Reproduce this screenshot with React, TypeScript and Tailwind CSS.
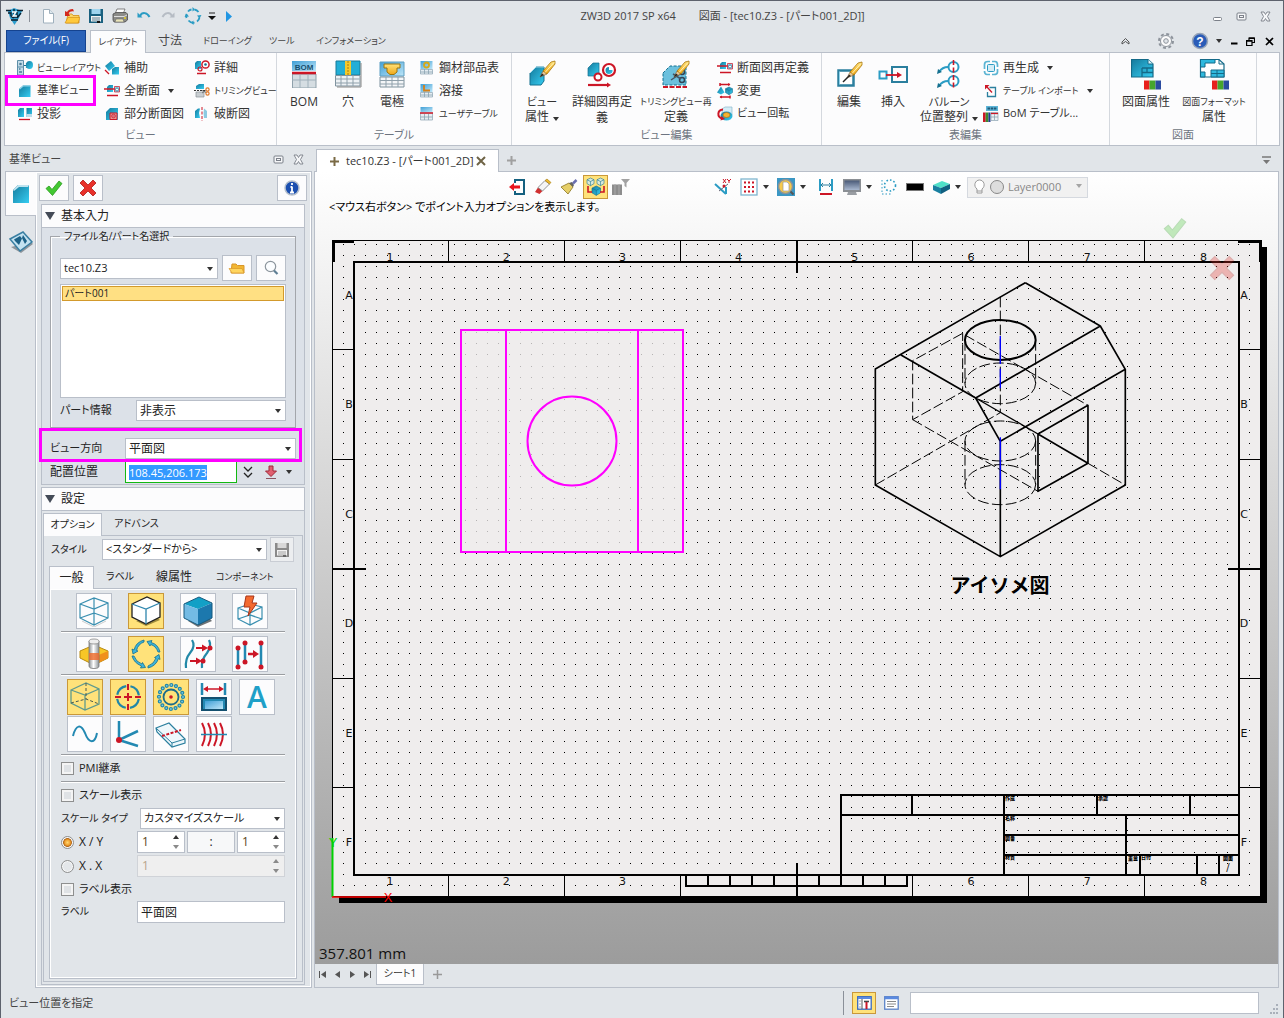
import React, { useEffect, useRef } from "react";

type Kids = { children?: React.ReactNode };

const TEAL = "url(#teal)";
const DK = "#14708f";
const RED = "#cc1626";

function Defs() {
  return (
    <svg className="absolute h-0 w-0" aria-hidden="true">
      <defs>
        <linearGradient id="teal" x1="0" y1="0" x2="1" y2="1">
          <stop offset="0" stopColor="#157a9c" />
          <stop offset="1" stopColor="#35cdf2" />
        </linearGradient>
        <linearGradient id="sky" x1="0" y1="0" x2="1" y2="1">
          <stop offset="0" stopColor="#3f9fd6" />
          <stop offset="1" stopColor="#bfe6f8" />
        </linearGradient>
        <linearGradient id="cyl" x1="0" y1="0" x2="1" y2="0">
          <stop offset="0" stopColor="#8d9296" />
          <stop offset="0.45" stopColor="#ffffff" />
          <stop offset="1" stopColor="#8d9296" />
        </linearGradient>
        <linearGradient id="gold" x1="0" y1="0" x2="0" y2="1">
          <stop offset="0" stopColor="#ffe27a" />
          <stop offset="1" stopColor="#f0a818" />
        </linearGradient>
        <linearGradient id="screen" x1="0" y1="0" x2="0" y2="1">
          <stop offset="0" stopColor="#4a5a78" />
          <stop offset="1" stopColor="#a9b8d0" />
        </linearGradient>
      </defs>
    </svg>
  );
}

function Svg({ w = 16, h = w, className = "", children }: Kids & { w?: number; h?: number; className?: string }) {
  return (
    <svg width={w} height={h} viewBox={`0 0 ${w} ${h}`} fill="none" className={`shrink-0 ${className}`} aria-hidden="true">
      {children}
    </svg>
  );
}

const Caret = ({ className = "", fill = "#333" }: { className?: string; fill?: string }) => (
  <svg width="6" height="4" viewBox="0 0 6 4" className={`shrink-0 ${className}`} aria-hidden="true">
    <path d="M0 0h6L3 4z" fill={fill} />
  </svg>
);

const Pencil = ({ x = 0, y = 0 }: { x?: number; y?: number }) => (
  <g transform={`translate(${x} ${y})`}>
    <path d="M0 16L3 10L7 13Z" fill="#e8c79a" stroke="#7a5a30" strokeWidth=".6" />
    <path d="M0 16l2-3.5 2 1.6z" fill="#222" />
    <path d="M3 10L11 1L15 0L15 3L7 13Z" fill="url(#gold)" stroke="#a8760c" strokeWidth=".8" />
    <path d="M5 11.5L14 1.500" stroke="#fff3b8" strokeWidth="1" />
  </g>
);

const Cube = ({ x, y, s, f = TEAL }: { x: number; y: number; s: number; f?: string }) => (
  <g transform={`translate(${x} ${y}) scale(${s})`}>
    <path d="M0 2.500L5 0L10 2.500V8L5 11L0 8Z" fill={f} stroke={DK} strokeWidth=".8" />
    <path d="M0 2.500L5 5L10 2.500M5 5V11" stroke={DK} strokeWidth=".8" fill="none" />
  </g>
);

/* ---------- quick access icons ---------- */

const AppIcon = () => (
  <Svg w={17}>
    <path d="M2 3L8 0L16 3L13 10L8.500 17L4 10Z" fill="#2f9fcf" />
    <path d="M0 2.500h5M11 2.500h6M2 5h3v3l3 2M8 1v5l-2 4M11 4v5h-3M15 5l-4 5M5 12h7" stroke="#0c2230" strokeWidth="1.400" />
    <path d="M6 4h4l-3 4h4" stroke="#fff" strokeWidth="1.300" />
  </Svg>
);
const NewIcon = () => (
  <Svg w={16}>
    <path d="M3.500 1.500H9.500L13.500 5.500V15H3.500Z" fill="#fff" stroke="#9fb0bd" />
    <path d="M9.500 1.500V5.500H13.500" fill="#dfe9ef" stroke="#9fb0bd" />
  </Svg>
);
const OpenIcon = () => (
  <Svg w={16}>
    <path d="M2 15L4 6H8L9 7.500H15V15Z" fill="url(#gold)" stroke="#d18d12" strokeWidth=".8" />
    <path d="M1 15L4 9.500H16L14 15Z" fill="#ffc93c" stroke="#d18d12" strokeWidth=".6" />
    <path d="M9 1C6 1 4 2 3 4L1 3V8H6L4.700 5.500C5.500 4 7 3 10 3.500Z" fill="#d3281c" />
  </Svg>
);
const SaveIcon = ({ grey = false }: { grey?: boolean }) => (
  <Svg w={16}>
    <path d="M1 1H15V15H1Z" fill={grey ? "#8a8a8a" : "#19607f"} />
    <path d="M3.500 1H12.500V6H3.500Z" fill={grey ? "#d8d8d8" : "#9fd4ee"} />
    <path d="M3 8H13V13.500H3Z" fill="#f3f3f3" />
    <path d="M4 10h8M4 12h8" stroke={grey ? "#a0a0a0" : "#5f7f90"} />
    <path d="M9 13h3v2H9z" fill={grey ? "#666" : "#111"} />
  </Svg>
);
const PrintIcon = () => (
  <Svg w={16}>
    <path d="M5 1H13L11 6H3Z" fill="#fff" stroke="#666" strokeWidth=".8" />
    <path d="M1 6L4 4.500H14L15.500 6V12L13 14H2L1 12Z" fill="#8b8b88" stroke="#4a4a4a" strokeWidth=".8" />
    <path d="M2 8.500H12L15 7" stroke="#ddd" />
    <path d="M4 11H11L12 14H3Z" fill="#e9e4b8" stroke="#666" strokeWidth=".6" />
    <circle cx="13" cy="10" r="1" fill="#e8d020" />
  </Svg>
);
const UndoIcon = ({ c = "#2b9cc4" }: { c?: string }) => (
  <Svg w={16}>
    <path d="M4 8C6 4 11 4 13.500 9" stroke={c} strokeWidth="2" />
    <path d="M1.500 4.500V9.500H6.500Z" fill={c} />
  </Svg>
);
const RefreshIcon = () => (
  <Svg w={18}>
    <path d="M4 4.500A6.500 6.500 0 0 1 7.500 2.500M10.500 2.500A6.500 6.500 0 0 1 14.500 5M15.500 10.500A6.500 6.500 0 0 1 13 14.500M10.500 15.700A6.500 6.500 0 0 1 4.500 13.500M2.500 11A6.500 6.500 0 0 1 2.500 7" stroke="#2b9cc4" strokeWidth="1.800" />
    <path d="M8.500 0L11 2.500L8.500 4.500ZM17.500 8L15.500 11.500L13 8.500ZM9.500 18L7 15.500L9.500 13.500ZM.5 10L2.500 6.500L5 9.500Z" fill="#2b9cc4" />
  </Svg>
);

/* ---------- small ribbon icons ---------- */

const I = {
  viewLayout: (
    <Svg>
      <path d="M.5 .5H6.500V15H.5Z" fill="#c3dbe8" stroke="#5d8ea8" />
      <path d="M.5 7h6" stroke="#5d8ea8" />
      <circle cx="3.500" cy="4" r="1.300" fill="#4a7d99" />
      <path d="M2 9h1.500M2 12h3" stroke="#4a7d99" strokeWidth="1.500" />
      <path d="M7 5.500h4M9 3.500l2.500 2L9 7.500" stroke={DK} strokeWidth="1.200" />
      <ellipse cx="12.500" cy="5" rx="3.500" ry="4" fill={TEAL} />
    </Svg>
  ),
  base: (
    <Svg>
      <path d="M2 6L6 2.500H13.500V14H2Z" fill={TEAL} />
      <path d="M2 6L6 2.500H13.500L13 3.500H6.500L3 6.500Z" fill="#8fd6ec" />
    </Svg>
  ),
  project: (
    <Svg>
      <path d="M1 4L3 2H7V11H1Z" fill={TEAL} />
      <path d="M9.500 2H15V11H9.500Z" fill={TEAL} />
      <path d="M2 13.500H13" stroke={RED} strokeWidth="1.300" />
      <path d="M9.500 8H15V11H9.500Z" fill="#bcdceb" />
    </Svg>
  ),
  aux: (
    <Svg>
      <path d="M1 6L7 1L11 6L5 11Z" fill={TEAL} />
      <path d="M8 9L11 7H15V14.500H8Z" fill={TEAL} />
      <path d="M1 10L5 14" stroke={RED} strokeWidth="1.200" />
    </Svg>
  ),
  fullSection: (
    <Svg>
      <path d="M3 4L5 2H9V9H3Z" fill={TEAL} />
      <path d="M0 6H16" stroke={RED} strokeWidth="1.500" />
      <path d="M10.500 3.500H15.500V9H10.500Z" fill="#9dcfe3" stroke={RED} strokeWidth=".7" />
      <circle cx="13" cy="6.500" r="1.500" fill="#fff" stroke={DK} strokeWidth=".7" />
      <path d="M3 12.500H14" stroke={RED} strokeWidth="1.500" />
    </Svg>
  ),
  partSection: (
    <Svg>
      <path d="M2 6L6 2H14V14H2Z" fill={TEAL} />
      <path d="M6 7H13V13.500H6Z" fill="#e89a92" stroke={RED} />
      <circle cx="9.500" cy="10" r="2" fill="#d5707a" stroke={RED} strokeWidth=".6" />
    </Svg>
  ),
  detail: (
    <Svg>
      <path d="M1 3L3 1H7V9H1Z" fill={TEAL} />
      <circle cx="11.500" cy="4.500" r="3.600" stroke={RED} strokeWidth="1.500" fill="#fff" />
      <circle cx="11.500" cy="4.500" r="1.300" fill={DK} />
      <circle cx="6" cy="9" r="2" stroke={RED} strokeWidth="1.200" />
      <path d="M3 13.500H12" stroke={RED} strokeWidth="1.500" />
    </Svg>
  ),
  trim: (
    <Svg>
      <path d="M2 3L5 1H10V6H2Z" fill={TEAL} />
      <path d="M0 7.500H11" stroke="#333" strokeDasharray="2 1" />
      <path d="M2 9H10V14H2Z" fill="#c9ced2" stroke="#8a9299" strokeWidth=".7" />
      <circle cx="13.500" cy="6.500" r="1.600" stroke="#e07828" strokeWidth="1.200" />
      <circle cx="13.500" cy="10.500" r="1.600" stroke="#e07828" strokeWidth="1.200" />
      <path d="M12 7.500L8 10M12 9.500L8 7.500" stroke="#777" />
    </Svg>
  ),
  broken: (
    <Svg>
      <path d="M1 5L4 2.500H6L5 7L6 12H1Z" fill={TEAL} />
      <path d="M10 2.500L13 5V12H10L9.500 7Z" fill="#8ccbe2" />
      <path d="M8 1V15" stroke={RED} strokeDasharray="3 1.500" />
    </Svg>
  ),
  steel: (
    <Svg>
      <path d="M1.500 1H13.500V9H1.500Z" fill="url(#sky)" />
      <circle cx="7.500" cy="5" r="2.500" stroke="#d6a818" strokeWidth="1.800" />
      <path d="M1.500 9.500H13.500V14H1.500Z" fill="#e5edf2" stroke="#8aa2b0" strokeWidth=".7" />
      <path d="M5.500 9v5M9.500 9v5M1.500 12h12" stroke="#8aa2b0" strokeWidth=".8" />
    </Svg>
  ),
  weld: (
    <Svg>
      <path d="M1.500 1H13.500V9H1.500Z" fill="url(#sky)" />
      <path d="M5 2V7.500H11" stroke="#d68018" strokeWidth="1.800" />
      <path d="M1.500 9.500H13.500V14H1.500Z" fill="#e5edf2" stroke="#8aa2b0" strokeWidth=".7" />
      <path d="M5.500 9v5M9.500 9v5M1.500 12h12" stroke="#8aa2b0" strokeWidth=".8" />
    </Svg>
  ),
  userTable: (
    <Svg>
      <path d="M1.500 1H13.500V6H1.500Z" fill="url(#sky)" />
      <path d="M1.500 7H13.500V14H1.500Z" fill="#e5edf2" stroke="#8aa2b0" strokeWidth=".7" />
      <path d="M5.500 8v6M9.500 8v6M1.500 11h12" stroke="#8aa2b0" strokeWidth=".8" />
      <path d="M1 7H14" stroke={RED} strokeWidth="1.500" />
    </Svg>
  ),
  change: (
    <Svg>
      <path d="M3 1.500H13M3 0v3" stroke={RED} strokeWidth="1.500" />
      <path d="M0 9.500L4 3.500L7.500 9.500L4 11.500Z" fill={TEAL} />
      <Cube x={8.500} y={4} s={0.700} />
      <path d="M3 14H13M13 12.500v3" stroke={RED} strokeWidth="1.500" />
      <path d="M11 0l2.500 1.500L11 3zM5 12.500L2.500 14L5 15.500z" fill={RED} />
    </Svg>
  ),
  rotate: (
    <Svg>
      <path d="M5 3L8 1H15V9H5Z" fill="#d4ecf6" stroke="#8bb9cc" strokeWidth=".7" />
      <ellipse cx="9.500" cy="10" rx="6" ry="4.500" fill={TEAL} />
      <ellipse cx="9.500" cy="9" rx="3.500" ry="2.500" fill="#f5b430" stroke="#b0660c" strokeWidth=".6" />
      <path d="M6 3.500C0 4 0 11 5 12.500" stroke={RED} strokeWidth="2" />
      <path d="M3.500 14.500L8 13L4.500 10Z" fill={RED} />
    </Svg>
  ),
  regen: (
    <Svg>
      <rect x="4.500" y="4.500" width="7" height="7" rx="1" fill="#d5ecf5" stroke="#2b9cc4" />
      <path d="M1.500 9V4.500Q1.500 1.500 5 1.500H7M9 1.500H12Q14.500 1.500 14.500 5V7M14.500 9V12Q14.500 14.500 11 14.500H9M7 14.500H4Q1.500 14.500 1.500 11" stroke="#5bb4d3" strokeWidth="1.700" />
    </Svg>
  ),
  importTable: (
    <Svg>
      <path d="M6.500 4.500H12.500V13.500H4.500V9" stroke="#2b7f9e" strokeWidth="1.300" />
      <path d="M4 4L9 9.500" stroke={RED} strokeWidth="1.300" />
      <path d="M2 2H6.500L2 6.500Z" fill={RED} />
    </Svg>
  ),
  bomTable: (
    <Svg>
      <path d="M3 0H15V5H3Z" fill="#5db5d8" />
      <path d="M4.500 2.500h9" stroke="#1d5a78" strokeWidth="2" strokeDasharray="2.500 .7" />
      <path d="M0 6.500H2.700V16H0Z" fill={RED} />
      <path d="M2.700 6.500H5.400V16H2.700Z" fill="#3d8a2e" />
      <path d="M5.400 6.500H7.500V16H5.400Z" fill="#253a8e" />
      <path d="M8 6.500H15V14.500H8Z" fill="#eef3f6" stroke="#8aa2b0" strokeWidth=".7" />
      <path d="M8 7.500h7" stroke={RED} strokeWidth="1.300" />
      <path d="M11.500 8v6M8 11h7" stroke="#8aa2b0" strokeWidth=".8" />
    </Svg>
  ),
};

/* ---------- large ribbon icons ---------- */

const B = {
  bom: (
    <Svg w={28}>
      <path d="M2 1H26V11H2Z" fill="url(#sky)" />
      <text x="14" y="10" textAnchor="middle" fontSize="8" fontWeight="700" fill="#154f70" fontFamily="Liberation Sans">BOM</text>
      <path d="M2.500 14H26V28H2.500Z" fill="#d5dde2" stroke="#8fa0ab" />
      <path d="M10 15v13M18 15v13M2 20h24" stroke="#9fb0ba" />
      <path d="M2 13H26" stroke={RED} strokeWidth="2.500" />
    </Svg>
  ),
  hole: (
    <Svg w={28}>
      <path d="M2 1H26V15H2Z" fill="#22aed6" stroke="#167a9a" />
      <path d="M11 1H17V15H11Z" fill="#f5c92a" />
      <path d="M14 1V15" stroke="#a87c10" strokeDasharray="2 1" />
      <path d="M1.500 15.500H26V26H1.500Z" fill="#eef2f5" stroke="#7f929e" />
      <path d="M7 15v11M13 15v11M19 15v11M1.500 19h24M1.500 23h24" stroke="#8fa0ab" />
      <path d="M27 3V27H3" stroke="#888" />
    </Svg>
  ),
  electrode: (
    <Svg w={28}>
      <path d="M2 2H26V16H2Z" fill="url(#sky)" stroke="#5d9fc2" />
      <path d="M6 4H22V8H19V12L16 14.500H12L9 12V8H6Z" fill="url(#gold)" stroke="#9a7410" />
      <path d="M2 17H26V27H2Z" fill="#f4f6f8" stroke="#7f929e" />
      <path d="M8 17v10M14 17v10M20 17v10M2 20.500h24M2 24h24" stroke="#8fa0ab" />
    </Svg>
  ),
  viewAttr: (
    <Svg w={28}>
      <path d="M2 13L8 7H16V21L13 25H2Z" fill={TEAL} stroke={DK} />
      <path d="M2 13L8 7H16" stroke="#a6deef" />
      <Pencil x={12} y={1} />
    </Svg>
  ),
  detailRedef: (
    <Svg w={30} h={28}>
      <path d="M1 8L6 3H12V16H1Z" fill={TEAL} stroke={DK} strokeWidth=".7" />
      <circle cx="22" cy="10" r="6" fill="#fff" stroke={RED} strokeWidth="2.200" />
      <path d="M22 10V7A3.500 3.500 0 1 0 25.500 10Z" fill={TEAL} />
      <circle cx="11" cy="17" r="3.500" stroke={RED} strokeWidth="2" fill="#fff" />
      <path d="M1 25H20" stroke={RED} strokeWidth="2.200" />
      <path d="M20 22.500l4 2.500-4 2.500z" fill={RED} />
    </Svg>
  ),
  trimRedef: (
    <Svg w={30} h={28}>
      <path d="M2 13L9 6H25V25H2Z" fill="#6cc0dd" stroke={DK} strokeDasharray="3 1.500" />
      <circle cx="21" cy="12" r="2.500" stroke="#345" strokeWidth="1.500" />
      <circle cx="21" cy="20" r="2.500" stroke="#345" strokeWidth="1.500" />
      <path d="M10 20l9-6M12 14l8 5" stroke="#456" strokeWidth="1.500" />
      <path d="M2 27H26" stroke={RED} strokeWidth="2" strokeDasharray="5 1.500" />
      <Pencil x={13} y={1} />
    </Svg>
  ),
  edit: (
    <Svg w={28}>
      <path d="M3.500 10.500H18.500V25.500H3.500Z" fill="#fff" stroke="#2b7f9e" strokeWidth="2.500" />
      <path d="M4.500 24.500V11.500" stroke="#8fd2ea" />
      <Pencil x={12} y={2} />
      <path d="M8 22l5-5" stroke="#222" strokeWidth="1.500" />
    </Svg>
  ),
  insert: (
    <Svg w={30} h={28}>
      <rect x="1.500" y="11.500" width="7" height="7" stroke="#2b9cc4" strokeWidth="2" />
      <rect x="14" y="7" width="15" height="15" stroke="#2b7f9e" strokeWidth="2" />
      <path d="M8 15H20" stroke={RED} strokeWidth="1.800" />
      <path d="M19 12l5 3-5 3z" fill={RED} />
    </Svg>
  ),
  balloon: (
    <Svg w={28} h={30}>
      <circle cx="18.500" cy="8" r="5" stroke="#2b9cc4" strokeWidth="2" fill="#fff" />
      <circle cx="18.500" cy="22" r="5" stroke="#2b9cc4" strokeWidth="2" fill="#fff" />
      <path d="M13 8C8 8 6 10 4 13M13 22C8 22 6 24 4 27" stroke="#2b9cc4" strokeWidth="2" />
      <path d="M2 15l1-5 4 3zM2 29l1-5 4 3z" fill={DK} />
      <path d="M18.500 1V30" stroke={RED} strokeWidth="1.600" strokeDasharray="5 2.500" />
    </Svg>
  ),
  sheetAttr: (
    <Svg w={30} h={32}>
      <path d="M.5 1.500H17L22 6V19H.5Z" fill={TEAL} stroke="#146a88" strokeWidth="1.200" />
      <path d="M17 1.500V6H22" fill="#dff3fa" stroke="#146a88" />
      <path d="M11 10h11M11 14.500h11M11 10v9M16 10v4.500" stroke="#146a88" strokeWidth="1.300" />
      <path d="M13 22.500H18.500V31.500H13Z" fill="#e8201c" />
      <path d="M18.500 22.500H24.500V31.500H18.500Z" fill="#46a52e" />
      <path d="M24.500 22.500H30V31.500H24.500Z" fill="#2a4ba0" />
    </Svg>
  ),
  sheetFormat: (
    <Svg w={30} h={32}>
      <path d="M1.500 1.500H20L25 6V19H1.500Z" fill="#fff" stroke="#146a88" strokeWidth="1.200" />
      <path d="M1.500 1.500H16V5H6V9H1.500ZM1.500 14H6V19H1.500ZM12 12H25V19H12Z" fill="#2fb9de" stroke="#146a88" />
      <path d="M20 1.500V6H25M12 15.500h13M18 12v7" stroke="#146a88" />
      <path d="M13 22.500H18.500V31.500H13Z" fill="#e8201c" />
      <path d="M18.500 22.500H24.500V31.500H18.500Z" fill="#46a52e" />
      <path d="M24.500 22.500H30V31.500H24.500Z" fill="#2a4ba0" />
    </Svg>
  ),
};

/* ---------- ribbon parts ---------- */

type Size = "xs" | "s" | "m";
const TEXT: Record<Size, string> = { xs: "text-[9px]", s: "text-[11px]", m: "text-xs" };

function Small({ icon, label, caret, size = "m" }: { icon: React.ReactNode; label: string; caret?: boolean; size?: Size }) {
  return (
    <button className={`flex h-[23px] items-center gap-1 whitespace-nowrap ${TEXT[size]}`}>
      {icon}
      <span>{label}</span>
      {caret && <Caret className="ml-1" />}
    </button>
  );
}

function Big({ icon, lines, caret, className, size = "m" }: { icon: React.ReactNode; lines: string[]; caret?: boolean; className: string; size?: Size }) {
  return (
    <button className={`flex shrink-0 flex-col items-center pt-[5px] leading-[15px] whitespace-nowrap ${className}`}>
      <span className="mb-1 flex h-8 items-center">{icon}</span>
      {lines.map((l, i) => (
        <span key={l} className={`flex items-center gap-1 ${i === 0 ? TEXT[size] : ""}`}>
          {l}
          {caret && i === lines.length - 1 && <Caret className="mt-1" />}
        </span>
      ))}
    </button>
  );
}

function Group({ label, className, children }: Kids & { label: string; className: string }) {
  return (
    <section className={`flex shrink-0 flex-col border-r border-[#d4d8de] ${className}`}>
      <div className="flex flex-1">{children}</div>
      <h2 className="h-5 text-center text-[11px] leading-5 text-[#6d7480]">{label}</h2>
    </section>
  );
}

/* ---------- form parts ---------- */

function Combo({ id, value, className, small }: { id: string; value: string; className: string; small?: boolean }) {
  return (
    <div className={`relative h-[21px] border border-[#b9bfc9] bg-white ${className}`}>
      <select id={id} aria-label={id} className={`block h-full w-full appearance-none bg-transparent px-[3px] outline-none ${small ? "text-[11px]" : "text-xs"}`}>
        <option>{value}</option>
      </select>
      <Caret className="pointer-events-none absolute top-2 right-1" />
    </div>
  );
}

function Tool({ on, label, children }: Kids & { on?: boolean; label: string }) {
  return (
    <button aria-label={label} className={`flex h-9 w-9 items-center justify-center border ${on ? "border-[#c9983a] bg-[#ffe27a]" : "border-[#b9bfc9] bg-[#fcfcfd]"}`}>
      {children}
    </button>
  );
}

function Spin({ id, value, className, disabled }: { id: string; value: string; className: string; disabled?: boolean }) {
  return (
    <div className={`flex h-[22px] items-center justify-between border pr-[5px] ${disabled ? "border-[#d0d3d8] bg-[#efefef]" : "border-[#b9bfc9] bg-white"} ${className}`}>
      <input id={id} aria-label={id} defaultValue={value} disabled={disabled} className={`w-6 min-w-0 flex-1 bg-transparent pl-1 text-xs outline-none ${disabled ? "text-[#b8a48c]" : "text-[#5b4520]"}`} />
      <Svg w={6} h={14}>
        <path d="M0 4L3 0L6 4Z" fill={disabled ? "#8a8a8a" : "#333"} />
        <path d="M0 10L3 14L6 10Z" fill="#8a8a8a" />
      </Svg>
    </div>
  );
}

function Check({ id, label }: { id: string; label: string }) {
  return (
    <label htmlFor={id} className="flex items-center gap-[5px] text-[11px]">
      <input id={id} type="checkbox" className="h-[13px] w-[13px] appearance-none border border-[#8e8f8f] bg-[#dfe2e5] shadow-[inset_0_0_0_2px_#f4f4f4]" />
      {label}
    </label>
  );
}

function Radio({ id, label, on }: { id: string; label: string; on?: boolean }) {
  return (
    <label htmlFor={id} className="flex w-[76px] shrink-0 items-center gap-[5px]">
      <input
        id={id}
        type="radio"
        name="scale"
        defaultChecked={on}
        className="h-[13px] w-[13px] appearance-none rounded-full border border-[#8e8f8f] bg-[#e4e7ea] shadow-[inset_0_0_0_1px_#f8f8f8] checked:bg-[radial-gradient(circle,#ffd873_0%,#f0a030_35%,#a85c10_55%,#f4f4f4_62%)]"
      />
      {label}
    </label>
  );
}

const Rule = () => <hr className="mx-[11px] border-t border-b border-t-[#9a9da1] border-b-white" />;

/* ---------- option icons (32 x 32) ---------- */

const wire = "#3a8fb0";
const T = {
  wire: (
    <Svg w={32}>
      <path d="M2 9L16 3L30 8V23L16 30L2 23ZM2 9L16 14L30 8M16 14V30M16 3V18L2 23M16 18L30 23" stroke={wire} strokeWidth="1.200" />
      <path d="M4 26l12 6 12-6" stroke="#ccc" />
    </Svg>
  ),
  solid: (
    <Svg w={32}>
      <path d="M6 26L16 31L30 25L26 22Z" fill="#a08c3c" />
      <path d="M2 9L17 2L30 8V22L16 29L2 22Z" fill="#fff" stroke="#222" strokeWidth="1.300" />
      <path d="M2 9L16 14L30 8M16 14V29" stroke="#2f86ad" strokeWidth="1.300" />
    </Svg>
  ),
  shaded: (
    <Svg w={32}>
      <path d="M6 26L16 32L30 26L26 22Z" fill="#6d7275" />
      <path d="M2 9L17 2L30 8L16 14Z" fill="#12a0c6" />
      <path d="M2 9L16 14V30L2 23Z" fill="#74bbe4" />
      <path d="M30 8L16 14V30L30 23Z" fill="#1c78ad" />
      <path d="M2 9L17 2L30 8V23L16 30L2 23Z" stroke="#175a7f" />
    </Svg>
  ),
  quick: (
    <Svg w={32}>
      <path d="M4 13L16 9L28 12V24L16 30L4 24ZM4 13L16 18L28 12M16 18V30M4 24L16 20L28 24" stroke={wire} strokeWidth="1.200" />
      <path d="M12 1H20L18 8H23L14 21L16 12H10Z" fill="#f36a30" stroke="#a8361a" />
    </Svg>
  ),
  thread: (
    <Svg w={32}>
      <path d="M2 13L16 7L30 13V20L16 27L2 20Z" fill="#f7c626" stroke="#b88a10" />
      <path d="M16 19V27L30 20V13Z" fill="#f0901c" />
      <path d="M11 3V28A5 2.500 0 0 0 21 28V3Z" fill="url(#cyl)" stroke="#777" strokeWidth=".8" />
      <path d="M11 15H21V22H11Z" fill="#ef6a28" opacity=".8" />
      <ellipse cx="16" cy="3.500" rx="5" ry="2.500" fill="#eee" stroke="#888" strokeWidth=".8" />
    </Svg>
  ),
  cycle: (
    <Svg w={32}>
      <g stroke={DK} strokeWidth=".8" fill="#3bb4dd">
        <path d="M14 2Q6 4 4 12L2 11L3 16L8 13L6.500 12.500Q8 6 14 4Z" />
        <path d="M30 14Q28 6 21 4.500L22 2.500L17 3.500L20 8L20.700 6.500Q26 8 28 14Z" />
        <path d="M18 30Q26 28 28.500 20.500L30 21.500L29 16.500L24.500 19.500L26 20Q24 26 18 28Z" />
        <path d="M2 18Q4 25 11.500 28L10.500 30L15.500 29.500L12.500 24.500L12 26Q6 24 4 18Z" />
      </g>
    </Svg>
  ),
  curve: (
    <Svg w={32}>
      <path d="M10 2Q14 8 8 15Q3 21 4 30M27 2Q30 8 25 15Q19 22 20 30" stroke="#2389a8" strokeWidth="2.200" />
      <path d="M14 10H22M8 23H15" stroke={RED} strokeWidth="2" />
      <path d="M20 6.500l6 3.500-6 3.500zM14 19.500l6 3.500-6 3.500z" fill={RED} />
      <circle cx="28" cy="10" r="2.500" fill={RED} />
      <circle cx="21" cy="23" r="2.500" fill={RED} />
    </Svg>
  ),
  shift: (
    <Svg w={32}>
      <path d="M4 10V28M11 5V23M27 5V28" stroke="#2389b2" strokeWidth="2.500" />
      <path d="M14 16H20" stroke={RED} strokeWidth="2.500" />
      <path d="M19 12l6 4-6 4z" fill={RED} />
      <g fill={RED}>
        <circle cx="4" cy="10" r="2.500" /><circle cx="4" cy="29" r="2.500" /><circle cx="11" cy="5" r="2.500" />
        <circle cx="11" cy="24" r="2.500" /><circle cx="27" cy="5" r="2.500" /><circle cx="27" cy="29" r="2.500" />
      </g>
    </Svg>
  ),
  hidden: (
    <Svg w={32}>
      <path d="M2 9L17 2L30 8V23L16 29L2 22ZM2 9L16 14L30 8M16 14V29" stroke="#5f9a8f" strokeWidth="1.300" />
      <path d="M17 2V18M2 22L17 18L30 23" stroke="#4a5a50" strokeDasharray="3 2" />
    </Svg>
  ),
  target: (
    <Svg w={32}>
      <circle cx="16" cy="16" r="11" stroke="#2187a8" strokeWidth="2.200" strokeDasharray="13 4.280" strokeDashoffset="-2.140" />
      <path d="M16 3V9M16 23V29M3 16H9M23 16H29M16 12V20M12 16H20" stroke={RED} strokeWidth="2" />
    </Svg>
  ),
  bolt: (
    <Svg w={32}>
      <circle cx="16" cy="16" r="12" stroke="#2187a8" strokeWidth="4.200" strokeLinecap="round" strokeDasharray="0 4.712" />
      <circle cx="16" cy="16" r="12" stroke="#7cc8e0" strokeWidth="1.800" strokeLinecap="round" strokeDasharray="0 4.712" />
      <circle cx="16" cy="16" r="7.500" fill="#ffe27a" stroke="#1c6d8b" strokeWidth="1.800" />
      <circle cx="16" cy="16" r="1.800" fill={RED} />
    </Svg>
  ),
  dim: (
    <Svg w={32}>
      <path d="M4 2V14M27 2V14" stroke="#2389b2" strokeWidth="2.500" />
      <path d="M8 8H23" stroke={RED} strokeWidth="1.500" />
      <path d="M5 8l5-3v6zM26 8l-5-3v6z" fill={RED} />
      <rect x="4" y="17" width="24" height="12" fill="#2389b2" stroke="#14506f" strokeWidth="2" />
      <rect x="7" y="20" width="18" height="8" fill="url(#sky)" />
    </Svg>
  ),
  sine: (
    <Svg w={32}>
      <path d="M4 18C7 6 12 6 16 15C20 26 26 26 28 15" stroke="#2389b2" strokeWidth="2" />
    </Svg>
  ),
  axes: (
    <Svg w={32}>
      <path d="M7 3V22L26 13M7 22L26 28" stroke="#2389b2" strokeWidth="2.500" />
      <circle cx="7" cy="22" r="3" fill={RED} />
    </Svg>
  ),
  bend: (
    <Svg w={32}>
      <path d="M1 10L14 5L30 21V25L17 29L2 14Z" fill="#eef7fb" stroke="#2b7f9e" strokeWidth="1.200" />
      <path d="M1 10L17 25L30 21M17 25V29" stroke="#2b7f9e" />
      <path d="M7 18L26 12" stroke={RED} strokeWidth="2" strokeDasharray="3 1.500" />
    </Svg>
  ),
  hatch: (
    <Svg w={32}>
      <path d="M4 5Q10 16 4 28M10 5Q16 16 10 28M16 5Q22 16 16 28M22 5Q28 16 22 28" stroke={RED} strokeWidth="2" />
      <path d="M3 16.500H29" stroke="#2389b2" strokeWidth="1.500" />
    </Svg>
  ),
};

const CheckMark = ({ w = 18 }: { w?: number }) => (
  <svg width={w} height={w} viewBox="0 0 18 18" aria-hidden="true">
    <path d="M1 9.500L4 7L7 10.500L14 2L17 4.500L7.500 16.500Z" fill="#43c832" stroke="#2b9a20" strokeWidth=".8" />
  </svg>
);
const CrossMark = ({ w = 18 }: { w?: number }) => (
  <svg width={w} height={w} viewBox="0 0 18 18" aria-hidden="true">
    <path d="M1 4L4 1L9 6L14 1L17 4L12 9L17 14L14 17L9 12L4 17L1 14L6 9Z" fill="#e8302a" stroke="#b01a16" strokeWidth=".8" />
  </svg>
);
const FloatIcon = () => (
  <Svg w={11} h={9}>
    <rect x="1" y="1" width="9" height="7" rx="1" stroke="#7b8089" fill="#f5f6f8" />
    <rect x="3.500" y="3.500" width="4" height="2" stroke="#7b8089" />
  </Svg>
);
const HollowX = () => (
  <Svg w={11}>
    <path d="M1 1H4L5.500 3.500L7 1H10L7.500 5.500L10 10H7L5.500 7.500L4 10H1L3.500 5.500Z" fill="#f5f6f8" stroke="#7b8089" strokeWidth=".9" />
  </Svg>
);

/* ---------- drawing sheet ---------- */

const COLS = ["1", "2", "3", "4", "5", "6", "7", "8"];
const ROWS = ["A", "B", "C", "D", "E", "F"];

function dotPaths() {
  let dark = "";
  let light = "";
  for (let r = 0; r < 59; r++) {
    for (let c = 0; c < 85; c++) {
      const x = Math.round(332 + c * 11.048);
      const y = Math.round(244 + r * 11.048);
      if (x > 1260) continue;
      if (y > 876 && x > 684 && x < 908) continue;
      const seg = `M${x} ${y}h1v1h-1z`;
      if (x > 461 && x < 683 && y > 330 && y < 551) light += seg;
      else dark += seg;
    }
  }
  return { dark, light };
}
const DOTS = dotPaths();

function Sheet() {
  const xs = [448, 564, 680, 912, 1028, 1144];
  const ys = [349, 459, 678, 787];
  return (
    <svg viewBox="315 216 963 748" preserveAspectRatio="xMinYMin meet" className="block w-full" role="img" aria-label="図面シート">
      <path d="M339 247H1267V903H339Z" fill="#000" />
      <path d="M332 240H1261V897H332Z" fill="#efeded" />
      <path d={DOTS.dark} fill="#000" shapeRendering="crispEdges" />
      <path d={DOTS.light} fill="#b5b3b3" shapeRendering="crispEdges" />

      <g stroke="#000" fill="none" shapeRendering="crispEdges">
        <rect x="332.500" y="240.500" width="928" height="656" />
        <rect x="354" y="262" width="885" height="613" strokeWidth="2" />
        {xs.map((x) => (
          <path key={x} d={`M${x + 0.5} 240V262M${x + 0.5} 875V896`} />
        ))}
        {ys.map((y) => (
          <path key={y} d={`M332 ${y + 0.5}H354M1239 ${y + 0.5}H1260`} />
        ))}
        <path d="M797 240V273M797 863V896M332 569H366M1228 569H1260" strokeWidth="2" />
        <path d="M333 262V241H354M1238 241H1260V262" strokeWidth="3" />
        <path d="M686 876V886H907V876M708 876V886M730 876V886M752 876V886M774 876V886M819 876V886M841 876V886M863 876V886M885 876V886" strokeWidth="2" />
        <path
          d="M841 875V795H1239M841 815H1239M1004 835H1239M1004 855H1239M912 795V815M1004 795V875M1097 795V815M1190 795V815M1126 815V875M1140 855V875M1197 855V875M1219 855V875"
          strokeWidth="2"
        />
      </g>

      <g fontFamily="DejaVu Sans" fontSize="11" textAnchor="middle" fill="#111">
        {COLS.map((c, i) => (
          <React.Fragment key={c}>
            <text x={390 + i * 116.200} y="261">{c}</text>
            {i !== 3 && i !== 4 && <text x={390 + i * 116.200} y="885">{c}</text>}
          </React.Fragment>
        ))}
        {ROWS.map((c, i) => (
          <React.Fragment key={c}>
            <text x="349" y={299 + i * 109.400}>{c}</text>
            <text x="1244" y={299 + i * 109.400}>{c}</text>
          </React.Fragment>
        ))}
        <text x="1228" y="871" fontSize="10">/</text>
      </g>
      <g fontFamily="Noto Sans CJK JP" fontSize="5" fontWeight="900" fill="#000">
        <text x="1005" y="800">作成</text>
        <text x="1098" y="800">承認</text>
        <text x="1005" y="820">名称</text>
        <text x="1005" y="840">図番</text>
        <text x="1005" y="859">材質</text>
        <text x="1128" y="860">重量</text>
        <text x="1141" y="859">日付</text>
        <text x="1223" y="860">図面</text>
      </g>

      <g stroke="#ff00ff" strokeWidth="2" fill="none">
        <rect x="461" y="330" width="222" height="222" />
        <path d="M506 330V552M638 330V552" />
        <circle cx="572" cy="441" r="44.500" />
      </g>

      <g transform="translate(820 270) scale(.3333)" fill="none" stroke="#000" strokeLinejoin="round">
        <path
          strokeWidth="5"
          d="M616 38L841 168L916 298V645L541 860L166 645V297L616 38M243 255L467 384L841 168M467 384L541 514L916 298M541 514V860M654 492L804 406V580L654 664ZM654 492L804 580"
        />
        <ellipse cx="541" cy="210" rx="106" ry="60" strokeWidth="6" />
        <path d="M467 384L654 492" strokeWidth="4" />
        <g strokeWidth="3" strokeDasharray="32 10">
          <path d="M541 80V428M428 190L278 272V449L428 365V190M435 195L804 406M278 449L654 664M166 645L541 428M804 580L916 645" />
          <path d="M435 210V340M647 210V340M435 513V644M647 513V644" />
          <ellipse cx="541" cy="340" rx="106" ry="61" />
          <ellipse cx="541" cy="513" rx="106" ry="60" />
          <ellipse cx="541" cy="644" rx="106" ry="60" />
        </g>
        <path d="M541 198V282M541 296V355M541 502V658" stroke="#0000ff" strokeWidth="4" />
      </g>
      <text x="1000" y="593" textAnchor="middle" fontFamily="Noto Sans CJK JP" fontSize="20" fontWeight="700" fill="#000" className="[font-feature-settings:normal]">アイソメ図</text>

      <path d="M332.500 838V897" stroke="#00d200" strokeWidth="2" />
      <path d="M332 897H386" stroke="#ff0000" strokeWidth="1.500" />
      <g fontFamily="Liberation Sans" fontSize="13" textAnchor="middle">
        <text x="333" y="847" fill="#00d200">Y</text>
        <text x="388" y="902" fill="#ff0000">X</text>
      </g>
    </svg>
  );
}

/* ---------- main areas ---------- */

function TitleBar() {
  return (
    <header className="flex h-[29px] items-center justify-between pt-px pr-3 pl-[5px]">
      <div className="flex items-center">
        <AppIcon />
        <span className="ml-[6px] h-3 w-px bg-[#8a9099]" />
        <div className="ml-[10px] flex items-center gap-2">
          <button aria-label="新規"><NewIcon /></button>
          <button aria-label="開く"><OpenIcon /></button>
          <button aria-label="保存"><SaveIcon /></button>
          <button aria-label="印刷"><PrintIcon /></button>
          <button aria-label="元に戻す"><UndoIcon /></button>
          <button aria-label="やり直し" className="-scale-x-100"><UndoIcon c="#b6bcc4" /></button>
          <button aria-label="更新"><RefreshIcon /></button>
        </div>
        <Svg w={8} h={8} className="ml-[6px]"><path d="M1 1h6" stroke="#222" /><path d="M0 4h8L4 8z" fill="#111" /></Svg>
        <Svg w={8} h={11} className="ml-[9px]"><path d="M1 0L7 5.500L1 11Z" fill="#2196e3" /></Svg>
      </div>
      <h1 className="text-[11px] whitespace-pre text-[#444]">{"ZW3D 2017 SP x64        図面 - [tec10.Z3 - [パート001_2D]]"}</h1>
      <div className="flex items-center gap-[13px]">
        <button aria-label="最小化"><Svg w={11} h={11}><rect x="1.500" y="6.500" width="8" height="3" rx="1" stroke="#7b8089" fill="#fff" /></Svg></button>
        <button aria-label="最大化"><FloatIcon /></button>
        <button aria-label="閉じる"><HollowX /></button>
      </div>
    </header>
  );
}

function MenuTabs() {
  return (
    <nav className="flex h-[22px] items-stretch justify-between px-[5px] text-xs text-[#444]">
      <div className="flex">
        <button className="w-20 border border-[#15438f] bg-[#2a62b8] text-[10px] text-white">ファイル(F)</button>
        <button className="z-10 -mb-px ml-1 w-14 border border-b-0 border-[#b9bfc9] bg-[#fcfcfd] text-[9px]">レイアウト</button>
        <button className="ml-3 w-[45px] text-left">寸法</button>
        <button className="w-[66px] text-left text-[9px]">ドローイング</button>
        <button className="w-[47px] text-left text-[9px]">ツール</button>
        <button className="text-left text-[9px]">インフォメーション</button>
      </div>
      <div className="flex items-center text-[#111]">
        <button aria-label="リボンを折りたたむ"><Svg w={9} h={8}><path d="M1 5L4.500 1.500L8 5V7L4.500 4.500L1 7Z" stroke="#444" strokeWidth=".9" /></Svg></button>
        <button aria-label="設定" className="ml-[27px]">
          <Svg w={18}>
            <circle cx="9" cy="9" r="7" stroke="#8e949c" strokeWidth="2" strokeDasharray="3 2.500" />
            <circle cx="9" cy="9" r="5.500" fill="#fbfbfb" stroke="#8e949c" />
            <circle cx="9" cy="9" r="2.300" fill="#e1e5e9" stroke="#8e949c" />
          </Svg>
        </button>
        <button aria-label="ヘルプ" className="ml-4">
          <Svg w={18}>
            <circle cx="9" cy="9" r="7.500" fill="#2a5cb8" stroke="#98a5b8" strokeWidth="1.500" />
            <text x="9" y="13.500" textAnchor="middle" fontSize="12" fontWeight="700" fill="#fff" fontFamily="Liberation Sans">?</text>
          </Svg>
        </button>
        <Caret className="ml-[7px]" />
        <button aria-label="最小化" className="ml-2"><Svg w={8}><path d="M1 6.500h6.500" stroke="#000" strokeWidth="2" /></Svg></button>
        <button aria-label="元に戻す" className="ml-2">
          <Svg w={9}><path d="M3 3V1h5.500v4.500H6" stroke="#000" strokeWidth="1.200" /><path d="M.6 3.500h5.400v5H.6z" stroke="#000" strokeWidth="1.200" /><path d="M3 1.200h5.500M.6 4h5.400" stroke="#000" strokeWidth="1.600" /></Svg>
        </button>
        <button aria-label="閉じる" className="mr-1 ml-[10px]"><Svg w={9}><path d="M1 1l7 7M8 1L1 8" stroke="#000" strokeWidth="1.700" /></Svg></button>
      </div>
    </nav>
  );
}

function Ribbon() {
  return (
    <div className="mx-[3px] flex h-[94px] border border-[#b9bfc9] bg-[#fcfcfd] text-xs text-[#333]">
      <Group label="ビュー" className="w-[272px]">
        <div className="grid w-full grid-cols-[87px_90px_80px] grid-rows-[23px_23px_23px] pt-[3px] pl-3">
          <Small icon={I.viewLayout} label="ビューレイアウト" size="xs" />
          <Small icon={I.aux} label="補助" />
          <Small icon={I.detail} label="詳細" />
          <div className="relative">
            <Small icon={I.base} label="基準ビュー" size="s" />
            <span className="pointer-events-none absolute -top-1 -left-3 h-[31px] w-[91px] border-[3px] border-[#ff00ff]" />
          </div>
          <Small icon={I.fullSection} label="全断面" caret />
          <Small icon={I.trim} label="トリミングビュー" size="xs" />
          <Small icon={I.project} label="投影" />
          <Small icon={I.partSection} label="部分断面図" />
          <Small icon={I.broken} label="破断図" />
        </div>
      </Group>
      <Group label="テーブル" className="w-[235px]">
        <Big icon={B.bom} lines={["BOM"]} className="ml-[5px] w-11" />
        <Big icon={B.hole} lines={["穴"]} className="w-11" />
        <Big icon={B.electrode} lines={["電極"]} className="w-11" />
        <div className="pt-[3px] pl-[5px]">
          <Small icon={I.steel} label="鋼材部品表" />
          <Small icon={I.weld} label="溶接" />
          <Small icon={I.userTable} label="ユーザテーブル" size="xs" />
        </div>
      </Group>
      <Group label="ビュー編集" className="w-[310px]">
        <Big icon={B.viewAttr} lines={["ビュー", "属性"]} caret size="s" className="ml-[3px] w-[54px]" />
        <Big icon={B.detailRedef} lines={["詳細図再定", "義"]} className="w-[66px]" />
        <Big icon={B.trimRedef} lines={["トリミングビュー再", "定義"]} size="xs" className="w-[82px]" />
        <div className="pt-[3px]">
          <Small icon={I.fullSection} label="断面図再定義" />
          <Small icon={I.change} label="変更" />
          <Small icon={I.rotate} label="ビュー回転" size="s" />
        </div>
      </Group>
      <Group label="表編集" className="w-[288px]">
        <Big icon={B.edit} lines={["編集"]} className="ml-[5px] w-11" />
        <Big icon={B.insert} lines={["挿入"]} className="w-11" />
        <Big icon={B.balloon} lines={["バルーン", "位置整列"]} caret size="s" className="w-[68px]" />
        <div className="pt-[3px]">
          <Small icon={I.regen} label="再生成" caret />
          <Small icon={I.importTable} label="テーブル インポート" caret size="xs" />
          <Small icon={I.bomTable} label="BoM テーブル..." size="s" />
        </div>
      </Group>
      <Group label="図面" className="w-[147px]">
        <Big icon={B.sheetAttr} lines={["図面属性"]} className="ml-[5px] w-[62px]" />
        <Big icon={B.sheetFormat} lines={["図面フォーマット", "属性"]} size="xs" className="w-[74px]" />
      </Group>
    </div>
  );
}

function SectionHead({ children }: Kids) {
  return (
    <h3 className="flex h-6 shrink-0 items-center gap-[6px] border border-[#b9bfc9] bg-[#fcfcfd] pl-[3px] text-xs">
      <Svg w={10} h={8}><path d="M0 0H10L5 8Z" fill="#444b57" /></Svg>
      {children}
    </h3>
  );
}

const barButton = "flex h-[26px] w-[30px] shrink-0 items-center justify-center border border-[#b9bfc9] bg-[#fcfcfd]";

function SidePanel() {
  const pos = useRef<HTMLInputElement>(null);
  useEffect(() => {
    pos.current?.focus({ preventScroll: true });
    pos.current?.select();
  }, []);
  return (
    <aside className="flex w-[307px] shrink-0 flex-col text-xs text-[#222]">
      <div className="flex h-[25px] items-center gap-[9px] pt-[2px] pr-2 pl-1">
        <h2 className="flex-1 text-[11px] text-[#444]">基準ビュー</h2>
        <button aria-label="フローティング"><FloatIcon /></button>
        <button aria-label="閉じる"><HollowX /></button>
      </div>
      <div className="flex flex-1">
        <div className="z-10 -mr-px flex w-[31px] shrink-0 flex-col">
          <button aria-label="基準ビュー" className="flex h-[45px] items-center justify-center border border-r-0 border-[#b9bfc9] bg-[#fcfcfd]">
            <Svg w={20}>
              <path d="M2 6L7 1H18V19H2Z" fill={TEAL} />
              <path d="M2 6L7 1H18L17 3H8L3 7Z" fill="#bfe3ef" />
            </Svg>
          </button>
          <button aria-label="配置" className="mt-3 flex h-7 items-center justify-center">
            <Svg w={26} h={24}>
              <path d="M3 17L13 23L25 14L23 12Z" fill="#8d959b" />
              <path d="M2 9L15 2L24 12L12 21Z" fill="#c3e2f0" stroke="#3a7fa2" strokeWidth="1.500" />
              <path d="M6 9.500L12 6L14 8.500L11 15L7 11ZM15 5l4 6-2 3-3-6z" fill="#1d6287" />
            </Svg>
          </button>
        </div>
        <div className="flex min-w-0 flex-1 flex-col border border-[#b9bfc9] bg-[#e1e5e9] pt-[3px] pr-[6px] pb-[2px] pl-[5px] shadow-[inset_0_0_0_1px_#fff]">
          <div className="-mx-[2px] mb-[3px] flex h-[26px] gap-[4px]">
            <button aria-label="OK" className={barButton}><CheckMark /></button>
            <button aria-label="キャンセル" className={barButton}><CrossMark /></button>
            <button aria-label="情報" className={`${barButton} ml-auto`}>
              <Svg w={18}>
                <circle cx="9" cy="9" r="7" fill="#1b4fb0" stroke="#b5bfcc" strokeWidth="1.500" />
                <path d="M9 4v2M9 7.500v6M7 13.500h4M7.500 8H9" stroke="#fff" strokeWidth="1.800" />
              </Svg>
            </button>
          </div>

          <SectionHead>基本入力</SectionHead>
          <div className="relative border border-t-0 border-[#b9bfc9] bg-[#dce1e8] px-2 pb-px">
            <fieldset className="h-[200px] min-w-0 border border-[#a3a6ab] px-[9px] shadow-[inset_1px_1px_0_#fff]">
              <legend className="px-1 text-[10px] leading-4">ファイル名/パート名選択</legend>
              <div className="mt-[11px] flex items-center gap-[4px]">
                <Combo id="ファイル" value="tec10.Z3" small className="min-w-0 flex-1" />
                <button aria-label="参照" className={barButton}>
                  <Svg w={18}>
                    <path d="M3 14L4 5H8L9.500 6.500H16V14Z" fill="#f2b632" stroke="#d8962a" />
                    <path d="M1 9.500H14L16 14H4Z" fill="#ffd55e" stroke="#d8962a" strokeWidth=".7" />
                  </Svg>
                </button>
                <button aria-label="検索" className={barButton}>
                  <Svg w={18}>
                    <circle cx="8.500" cy="7.500" r="5.200" stroke="#8d969e" strokeWidth="1.200" fill="#fbfdff" />
                    <path d="M12 11.500L15.500 15" stroke="#5f7f95" strokeWidth="2.200" />
                  </Svg>
                </button>
              </div>
              <ul role="listbox" aria-label="パート" className="mt-[3px] h-[114px] border border-[#b9bfc9] bg-white p-px">
                <li role="option" aria-selected="true" className="h-[15px] border border-[#d39a2c] bg-[#ffe083] pl-[2px] text-[10px] leading-[13px]">パート001</li>
              </ul>
              <div className="mt-[2px] flex items-center">
                <label htmlFor="パート情報" className="w-[76px] text-[11px]">パート情報</label>
                <Combo id="パート情報" value="非表示" className="min-w-0 flex-1" />
              </div>
            </fieldset>
            <div className="mt-[10px] flex items-center">
              <label htmlFor="ビュー方向" className="w-[75px] text-[11px]">ビュー方向</label>
              <Combo id="ビュー方向" value="平面図" className="min-w-0 flex-1" />
            </div>
            <span className="pointer-events-none absolute bottom-[22px] -left-[3px] h-[34px] w-[263px] border-[3px] border-[#ff00ff]" />
            <div className="mt-[2px] flex items-center">
              <label htmlFor="place" className="w-[75px]">配置位置</label>
              <input ref={pos} id="place" defaultValue="108.45,206.173" className="h-[22px] w-[112px] border border-[#12b812] bg-white px-[3px] text-[11px] outline-none selection:bg-[#3399ff] selection:text-white" />
              <Svg w={10} h={12} className="ml-[6px]"><path d="M1 1L5 5L9 1M1 7L5 11L9 7" stroke="#222" strokeWidth="1.300" /></Svg>
              <button aria-label="点を選択" className="ml-[11px]">
                <Svg w={14}><path d="M5 1H9V6H12.500L7 11.500L1.500 6H5Z" fill="#e06070" stroke="#a02838" /><path d="M2 13.500h10" stroke="#8a5560" /></Svg>
              </button>
              <Caret className="ml-[8px]" />
            </div>
          </div>

          <div className="h-[2px]" />
          <SectionHead>設定</SectionHead>
          <div className="flex flex-1 flex-col border border-t-0 border-[#b9bfc9] bg-[#e1e5e9] px-px pt-[2px] pb-[2px]">
            <div className="flex h-[22px]">
              <button className="z-10 -mb-px w-[59px] border border-b-0 border-[#b9bfc9] bg-[#fcfcfd] text-[10px]">オプション</button>
              <button className="ml-3 text-[10px]">アドバンス</button>
            </div>
            <div className="flex flex-1 flex-col border border-[#b9bfc9] px-[5px] pt-px pb-[2px]">
              <div className="flex items-center pr-[3px] pl-[2px]">
                <label htmlFor="スタイル" className="w-[51px] text-[10px]">スタイル</label>
                <Combo id="スタイル" value="<スタンダードから>" small className="min-w-0 flex-1" />
                <button aria-label="スタイル保存" className="ml-[3px] flex h-[25px] w-6 items-center justify-center border border-[#c9cdd4] bg-[#eceef0]"><SaveIcon grey /></button>
              </div>
              <div className="mt-1 flex h-[22px]">
                <button className="z-10 -mb-px w-[45px] border border-b-0 border-[#b9bfc9] bg-[#fcfcfd]">一般</button>
                <button className="ml-3 w-[50px] text-left text-[10px]">ラベル</button>
                <button className="w-[60px] text-left">線属性</button>
                <button className="text-left text-[9px]">コンポーネント</button>
              </div>
              <div className="flex-1 border border-[#b9bfc9] pt-1 shadow-[inset_0_0_0_1px_#fff]">
                <div className="flex gap-4 pl-[26px]">
                  <Tool label="ワイヤー">{T.wire}</Tool>
                  <Tool label="隠線なし" on>{T.solid}</Tool>
                  <Tool label="シェード">{T.shaded}</Tool>
                  <Tool label="クイック">{T.quick}</Tool>
                </div>
                <div className="h-[2px]" />
                <Rule />
                <div className="mt-[3px] mb-[2px] flex gap-4 pl-[26px]">
                  <Tool label="ねじ">{T.thread}</Tool>
                  <Tool label="更新" on>{T.cycle}</Tool>
                  <Tool label="曲線">{T.curve}</Tool>
                  <Tool label="移動">{T.shift}</Tool>
                </div>
                <Rule />
                <div className="mt-[3px] mb-[2px] grid grid-cols-[repeat(5,36px)] gap-x-[7px] gap-y-px pl-[17px]">
                  <Tool label="隠線" on>{T.hidden}</Tool>
                  <Tool label="中心線" on>{T.target}</Tool>
                  <Tool label="ボルト穴" on>{T.bolt}</Tool>
                  <Tool label="寸法">{T.dim}</Tool>
                  <Tool label="テキスト"><span className="text-[30px] leading-8 font-semibold text-[#1fa0c8]">A</span></Tool>
                  <Tool label="スプライン">{T.sine}</Tool>
                  <Tool label="座標">{T.axes}</Tool>
                  <Tool label="曲げ線">{T.bend}</Tool>
                  <Tool label="ハッチ">{T.hatch}</Tool>
                </div>
                <Rule />
                <div className="flex h-[25px] items-center px-[11px]"><Check id="pmi" label="PMI継承" /></div>
                <Rule />
                <div className="px-[11px]">
                  <div className="flex h-[25px] items-center"><Check id="scale-show" label="スケール表示" /></div>
                  <div className="flex items-center">
                    <label htmlFor="スケールタイプ" className="w-[79px] text-[10px]">スケール タイプ</label>
                    <Combo id="スケールタイプ" value="カスタマイズスケール" small className="min-w-0 flex-1" />
                  </div>
                  <div className="mt-[2px] flex items-center">
                    <Radio id="xy" label="X / Y" on />
                    <div className="flex flex-1 gap-[2px]">
                      <Spin id="scale-x" value="1" className="w-12" />
                      <span className="h-[22px] flex-1 border border-[#b9bfc9] bg-[#f7f8f9] text-center leading-5">:</span>
                      <Spin id="scale-y" value="1" className="w-12" />
                    </div>
                  </div>
                  <div className="mt-[2px] flex items-center">
                    <Radio id="xx" label="X . X" />
                    <Spin id="scale-value" value="1" disabled className="flex-1" />
                  </div>
                  <div className="flex h-6 items-center"><Check id="label-show" label="ラベル表示" /></div>
                  <div className="flex items-center">
                    <label htmlFor="label-text" className="w-[76px] text-[10px]">ラベル</label>
                    <input id="label-text" defaultValue="平面図" className="h-[22px] min-w-0 flex-1 border border-[#b9bfc9] bg-white px-[3px] outline-none" />
                  </div>
                </div>
              </div>
            </div>
          </div>
        </div>
      </div>
    </aside>
  );
}

function CanvasTools() {
  return (
    <div className="flex h-[30px] items-center pl-[193px]">
      <div className="flex items-center gap-2">
        <button aria-label="終了"><Svg w={18}><path d="M7 5V2H16V16H7V13" stroke="#14607f" strokeWidth="2" /><path d="M1 9L6 5V7.500H12V10.500H6V13Z" fill="#e8141c" /></Svg></button>
        <button aria-label="消しゴム"><Svg w={18}><path d="M1 14L4 9.500L8.500 13L5.500 16Z" fill="#d03030" /><path d="M4 9.500L11 2.500L15.500 6L8.500 13Z" fill="#f4f4f4" stroke="#777" strokeWidth=".8" /><path d="M11 2.500L13 1L17 4.500L15.500 6Z" fill="#f0b828" stroke="#a07810" strokeWidth=".6" /></Svg></button>
        <button aria-label="ブラシ"><Svg w={18}><path d="M1 9L9 5L13 9L8 16Z" fill="#e6cf68" stroke="#8a7420" strokeWidth=".8" /><path d="M9 5L12 4L14 7L13 9Z" fill="#666" /><path d="M13 5.500L16.500 2" stroke="#6a6fb0" strokeWidth="2.500" /></Svg></button>
      </div>
      <button aria-label="部品表示" className="ml-[5px] flex h-6 w-[25px] items-center justify-center border border-[#c9983a] bg-[#ffe27a]">
        <Svg w={20}>
          <Cube x={1} y={1} s={0.700} f="#dbe8d8" /><Cube x={11} y={1} s={0.700} f="#dbe8d8" />
          <Cube x={6} y={9} s={0.850} />
          <path d="M2 9v6h4M18 9v6h-4" stroke={RED} strokeWidth="1.600" />
        </Svg>
      </button>
      <button aria-label="フィルタ" className="ml-[4px]"><Svg w={18}><path d="M0 6.500H10V17H0Z" fill="#8d8d8d" /><path d="M3 6v11M7 6v11" stroke="#aaa" /><path d="M9 1H18L14.500 5V9.500L12.500 8V5Z" fill="#a2a2a2" /></Svg></button>

      <div className="ml-[84px] flex items-center">
        <button aria-label="座標"><Svg w={18}><path d="M1 6L12 16M12 16V9" stroke="#2b9cc4" strokeWidth="2" /><path d="M5 13L14 6" stroke="#667" /><path d="M9 1l3 4M12 1L9 5M13 1l2 2 2-2M15 3v2" stroke={RED} /><circle cx="10" cy="8" r="1.500" fill={RED} /></Svg></button>
        <button aria-label="グリッド" className="ml-2"><Svg w={18}><rect x="1" y="1" width="16" height="16" fill="#fff" stroke="#7fb6cf" strokeWidth="1.300" /><path d="M4 4.500h10M4 9h10M4 13.500h10" stroke={RED} strokeWidth="2" strokeDasharray="2 2" /></Svg></button>
        <Caret className="ml-[5px]" />
        <button aria-label="ズーム" className="ml-2"><Svg w={18}><rect x="0" y="0" width="18" height="18" fill="#3b97c4" /><circle cx="8.500" cy="8.500" r="7" fill="#f6c94c" stroke="#8a939a" strokeWidth="1.500" /><path d="M6 4h4l2 2v7H6z" fill="#fff" stroke="#999" strokeWidth=".7" /><path d="M13.500 13.500l3 3" stroke="#555" strokeWidth="2" /></Svg></button>
        <Caret className="ml-[5px]" />
        <button aria-label="寸法" className="ml-[11px]"><Svg w={18}><path d="M3 1V13M15 1V13" stroke="#2b9cc4" strokeWidth="2" /><path d="M4 7H14M6 5L4 7L6 9M12 5L14 7L12 9" stroke="#2b7f9e" /><path d="M3 16H15" stroke={RED} strokeWidth="2" /></Svg></button>
        <button aria-label="表示" className="ml-2"><Svg w={18}><rect x="0" y="1" width="18" height="13" fill="#8b8f94" /><rect x="1.500" y="2.500" width="15" height="9.500" fill="url(#screen)" /><path d="M5 14H13L14 17H4Z" fill="#9a9ea3" /></Svg></button>
        <Caret className="ml-[5px]" />
        <button aria-label="選択" className="ml-2"><Svg w={18}><circle cx="10" cy="7.500" r="5.500" stroke="#2b9cc4" strokeWidth="1.600" strokeDasharray="1.600 2" /><path d="M2 2V16H12" stroke="#6fb8d4" strokeWidth="1.400" strokeDasharray="1.500 2" /></Svg></button>
        <button aria-label="色" className="ml-2 h-2 w-[18px] border border-[#777] bg-black" />
        <button aria-label="レイヤー" className="ml-2"><Svg w={18}><path d="M1 7L10 3L18 6L9 10Z" fill="#4fe0c8" /><path d="M1 7L9 10V16L1 12Z" fill="#187fa0" /><path d="M18 6L9 10V16L18 11Z" fill="#116080" /></Svg></button>
        <Caret className="ml-[5px]" />
        <div className="relative ml-[6px] flex h-[21px] w-[121px] items-center border border-[#d5d9df] bg-[#f1f1f1]">
          <Svg w={36} h={18} className="ml-1">
            <path d="M5 11C1 8 3 2 7.500 2S14 8 10 11V15H5Z" fill="#fff" stroke="#999" /><path d="M5 13h5" stroke="#999" />
            <circle cx="25" cy="9" r="6.500" fill="#ddd" stroke="#888" />
          </Svg>
          <select aria-label="レイヤー選択" className="h-full w-full appearance-none bg-transparent text-[11px] text-[#888] outline-none"><option>Layer0000</option></select>
          <Caret fill="#a5a5a5" className="pointer-events-none absolute top-[6px] right-[5px]" />
        </div>
      </div>
    </div>
  );
}

function Workspace() {
  return (
    <main className="ml-[2px] flex min-w-0 flex-1 flex-col">
      <div className="flex h-[25px] items-end justify-between pl-[2px]">
        <div className="flex h-[22px] items-stretch">
          <div className="z-10 -mb-px flex w-[183px] items-center border border-b-0 border-[#b9bfc9] bg-white pl-3 text-xs text-[#333]">
            <Svg w={11}><path d="M5.500 1v9M1 5.500h9" stroke="#7a6a45" strokeWidth="2" /></Svg>
            <span className="ml-[6px] text-[11px] whitespace-nowrap">tec10.Z3 - [パート001_2D]</span>
            <button aria-label="タブを閉じる" className="mr-3 ml-auto"><Svg w={10}><path d="M1 1l8 8M9 1L1 9" stroke="#6f6446" strokeWidth="2" /></Svg></button>
          </div>
          <button aria-label="新しいタブ" className="ml-[7px]"><Svg w={11}><path d="M5.500 1v9M1 5.500h9" stroke="#a0a0a0" strokeWidth="2" /></Svg></button>
        </div>
        <button aria-label="タブ一覧" className="mr-2 mb-[6px]"><Svg w={9}><path d="M0 1h9" stroke="#777" strokeWidth="1.500" /><path d="M1 4h7L4.500 8z" fill="#777" /></Svg></button>
      </div>
      <div className="flex flex-1 flex-col border border-[#b9bfc9] pb-[2px]">
        <div className="relative flex-1 bg-linear-to-b from-white to-[#9c9c9c]">
          <CanvasTools />
          <p className="h-[14px] pl-[14px] text-[11px] leading-[10px] text-black">&lt;マウス右ボタン&gt; でポイント入力オプションを表示します。</p>
          <Sheet />
          <button aria-label="確定" className="absolute top-[44px] right-[91px] opacity-30"><CheckMark w={24} /></button>
          <button aria-label="取り消し" className="absolute top-[83px] right-[43px] opacity-30"><CrossMark w={26} /></button>
          <p className="absolute bottom-0 left-1 text-[15px] leading-[21px] text-[#111]">357.801 mm</p>
        </div>
        <div className="flex h-[21px] items-stretch text-xs text-[#333]">
          <div className="flex w-[61px] items-center gap-2 pl-1">
            <button aria-label="最初"><Svg w={7} h={7}><path d="M.5 0v7" stroke="#555" /><path d="M7 0v7L2 3.500z" fill="#555" /></Svg></button>
            <button aria-label="前"><Svg w={7} h={7}><path d="M6 0v7L1 3.500z" fill="#555" /></Svg></button>
            <button aria-label="次"><Svg w={7} h={7}><path d="M1 0v7l5-3.500z" fill="#555" /></Svg></button>
            <button aria-label="最後"><Svg w={7} h={7}><path d="M6.500 0v7" stroke="#555" /><path d="M0 0v7l5-3.500z" fill="#555" /></Svg></button>
          </div>
          <button className="w-12 border border-t-0 border-[#b9bfc9] bg-[#fcfcfd] text-[10px]">シート1</button>
          <button aria-label="シート追加" className="ml-2"><Svg w={11}><path d="M5.500 1v9M1 5.500h9" stroke="#999" strokeWidth="1.500" /></Svg></button>
        </div>
      </div>
    </main>
  );
}

function StatusBar() {
  return (
    <footer className="flex h-[30px] items-center pl-2 text-[11px] text-[#444]">
      <span className="w-[834px]">ビュー位置を指定</span>
      <span className="h-6 w-px bg-[#8a9099]" />
      <button aria-label="ツール表示" className="ml-2 flex h-[22px] w-6 items-center justify-center border border-[#c9983a] bg-[#ffe27a]">
        <Svg w={15} h={14}>
          <rect x=".7" y=".7" width="13.500" height="12.500" fill="#fff" stroke="#3a6ac0" strokeWidth="1.300" />
          <path d="M1 2h13" stroke="#5b8ae0" strokeWidth="2" />
          <path d="M5 3v10M2.500 5h1M2.500 8h1M2.500 11h1" stroke="#555" />
          <path d="M7 5.500h5" stroke="#444" strokeWidth="1.600" />
          <path d="M9.500 6v7" stroke={RED} strokeWidth="2" />
        </Svg>
      </button>
      <button aria-label="メッセージ" className="ml-2 flex">
        <Svg w={15} h={14}>
          <rect x=".7" y=".7" width="13.500" height="12.500" fill="#fff" stroke="#5b83c8" strokeWidth="1.300" />
          <path d="M1 2h13" stroke="#5b8ae0" strokeWidth="2.500" />
          <path d="M3 5.500h9M3 8h9M3 10.500h7" stroke="#888" />
        </Svg>
      </button>
      <input aria-label="コマンド入力" className="ml-[11px] h-[22px] min-w-0 flex-1 border border-[#b9bfc9] bg-white px-1 outline-none" />
      <Svg w={12} h={12} className="mt-3 mr-1 ml-2">
        <path d="M9 2h2M6 6h2M9 6h2M3 10h2M6 10h2M9 10h2" stroke="#a9b0ba" strokeWidth="2" />
      </Svg>
    </footer>
  );
}

export default function App() {
  return (
    <div className="flex min-h-screen flex-col border border-[#5d626d] bg-[#e1e5e9] font-['Open_Sans','Noto_Sans_CJK_JP',sans-serif] [font-feature-settings:'palt']">
      <Defs />
      <TitleBar />
      <MenuTabs />
      <Ribbon />
      <div className="flex flex-1 pr-1 pl-1">
        <SidePanel />
        <Workspace />
      </div>
      <StatusBar />
    </div>
  );
}
